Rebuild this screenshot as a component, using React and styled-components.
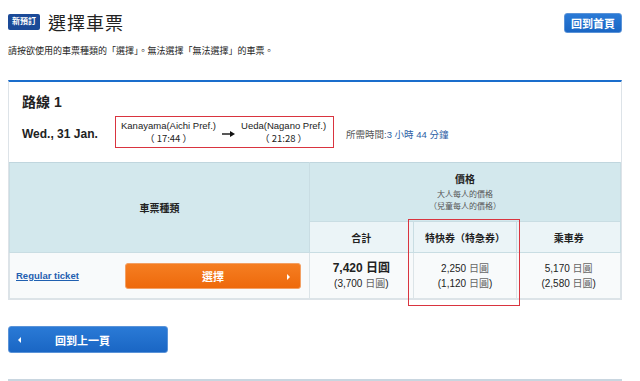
import React from 'react';
import styled, { createGlobalStyle } from 'styled-components';

const GlobalStyle = createGlobalStyle`
  body {
    margin: 0;
    background: #ffffff;
    font-family: "Liberation Sans", Arial, "Noto Sans CJK TC", sans-serif;
    color: #222;
  }
`;

const Page = styled.div`
  width: 614px;
  padding: 12px 18px 0 8px;
`;

const TopBar = styled.div`
  display: flex;
  align-items: center;
  justify-content: space-between;
  height: 20px;
`;

const TitleGroup = styled.div`
  display: flex;
  align-items: center;
  gap: 8px;
`;

const Badge = styled.span`
  background: #1b4a98;
  color: #fff;
  font-size: 8px;
  font-weight: bold;
  padding: 3px 4px;
  border-radius: 2px;
  line-height: 10px;
`;

const Title = styled.h1`
  margin: 0;
  font-size: 18px;
  font-weight: normal;
  letter-spacing: 1px;
  color: #222;
`;

const BlueButton = styled.button`
  background: linear-gradient(#2a7ad6, #1a66c4);
  border: 1px solid #5a93d8;
  border-radius: 3px;
  color: #fff;
  font-family: inherit;
  font-weight: bold;
  font-size: 11px;
  padding: 0;
  cursor: pointer;
`;

const HomeButton = styled(BlueButton)`
  width: 58px;
  height: 20px;
  margin-top: 2px;
`;

const Notice = styled.p`
  margin: 13px 0 0;
  font-family: "Noto Sans CJK TC", sans-serif;
  font-size: 9px;
  line-height: 12px;
`;

const Card = styled.div`
  margin-top: 23px;
  border: 1px solid #dde3e8;
  border-top: 2px solid #1a6dcc;
`;

const RouteHead = styled.div`
  padding: 12px 13px 14px;
`;

const RouteLabel = styled.div`
  font-size: 14px;
  font-weight: bold;
  line-height: 16px;
`;

const RouteRow = styled.div`
  display: flex;
  align-items: center;
  margin-top: 6px;
`;

const DateText = styled.div`
  font-size: 12px;
  font-weight: bold;
  width: 93px;
  padding-top: 4px;
`;

const StationBox = styled.div`
  display: flex;
  align-items: center;
  width: 210px;
  height: 30px;
  border: 1px solid #d9343f;
  padding: 0 2px 0 5px;
  gap: 6px;
`;

const Station = styled.div`
  font-size: 9.5px;
  line-height: 12px;
  text-align: center;
  white-space: nowrap;
  color: #222;
`;

const Time = styled.span`
  font-family: "Noto Sans CJK TC", sans-serif;
`;

const Duration = styled.div`
  margin-left: 12px;
  padding-top: 3px;
  font-size: 9.5px;
  color: #555;
`;

const Blue = styled.span`
  color: #2d5fa5;
`;

const TableWrap = styled.div`
  position: relative;
`;

const Table = styled.table`
  width: 100%;
  border-collapse: collapse;
  table-layout: fixed;
`;

const Th = styled.th`
  background: ${({ $light }) => ($light ? '#ebf4f7' : '#d3e8ed')};
  border: 1px solid #c9dde3;
  border-top-color: #c0d6de;
  font-size: 10px;
  font-weight: bold;
  color: #222;
  padding: 0;
  height: ${({ $h }) => $h || 'auto'};
`;

const SubNote = styled.div`
  font-size: 8px;
  font-weight: normal;
  color: #555;
  line-height: 12px;
`;

const PriceTitle = styled.div`
  margin-bottom: 3px;
`;

const Td = styled.td`
  background: #f8fafb;
  border: 1px solid #dce4e8;
  border-top: none;
  height: 45px;
  padding: 0;
  text-align: center;
  font-size: 10px;
  line-height: 14px;
  color: #333;
`;

const TicketCell = styled.div`
  display: flex;
  align-items: center;
  justify-content: space-between;
  padding: 0 8px 0 6px;
`;

const TicketLink = styled.a`
  color: #1f5fb0;
  font-weight: bold;
  font-size: 9.5px;
  text-decoration: underline;
`;

const SelectButton = styled.button`
  width: 176px;
  height: 26px;
  background: linear-gradient(#f57e22, #ee690b);
  border: 1px solid #f3a064;
  border-radius: 3px;
  color: #fff;
  font-family: inherit;
  font-weight: bold;
  font-size: 11px;
  position: relative;
  padding: 0;
  cursor: pointer;
`;

const Caret = styled.span`
  position: absolute;
  right: 10px;
  top: 10px;
  width: 0;
  height: 0;
  border-top: 3px solid transparent;
  border-bottom: 3px solid transparent;
  border-left: 3px solid #fff;
`;

const Amount = styled.div`
  font-size: ${({ $big }) => ($big ? '12px' : '10px')};
  font-weight: ${({ $big }) => ($big ? 'bold' : 'normal')};
  color: #222;
  line-height: 15px;
`;

const Yen = styled.span`
  color: ${({ $dark }) => ($dark ? '#222' : '#666')};
`;

const Highlight = styled.div`
  position: absolute;
  left: 399px;
  top: 57px;
  width: 110px;
  height: 85px;
  border: 1px solid #d9343f;
  pointer-events: none;
`;

const BackButton = styled(BlueButton)`
  display: flex;
  align-items: center;
  width: 160px;
  height: 27px;
  margin-top: 26px;
  padding-left: 9px;
`;

const BackCaret = styled.span`
  width: 0;
  height: 0;
  border-top: 3px solid transparent;
  border-bottom: 3px solid transparent;
  border-right: 3px solid #fff;
  margin-right: 34px;
`;

const BottomRule = styled.div`
  margin-top: 26px;
  height: 2px;
  background: #c9d6e0;
`;

const ArrowIcon = () => (
  <svg width="13" height="8" viewBox="0 0 13 8" style={{ marginTop: 4 }}>
    <path d="M0 4 H9" stroke="#111" strokeWidth="1.4" />
    <path d="M8 1 L13 4 L8 7 Z" fill="#111" />
  </svg>
);

const prices = [
  { adult: '2,250', child: '1,120' },
  { adult: '5,170', child: '2,580' },
];

export default function App() {
  return (
    <>
      <GlobalStyle />
      <Page>
        <TopBar>
          <TitleGroup>
            <Badge>新預訂</Badge>
            <Title>選擇車票</Title>
          </TitleGroup>
          <HomeButton>回到首頁</HomeButton>
        </TopBar>
        <Notice>請按欲使用的車票種類的「選擇」。無法選擇「無法選擇」的車票。</Notice>

        <Card>
          <RouteHead>
            <RouteLabel>路線 1</RouteLabel>
            <RouteRow>
              <DateText>Wed., 31 Jan.</DateText>
              <StationBox>
                <Station>
                  Kanayama(Aichi Pref.)
                  <br />
                  <Time>（ 17:44 ）</Time>
                </Station>
                <ArrowIcon />
                <Station>
                  Ueda(Nagano Pref.)
                  <br />
                  <Time>（ 21:28 ）</Time>
                </Station>
              </StationBox>
              <Duration>
                所需時間:<Blue>3 小時 44 分鐘</Blue>
              </Duration>
            </RouteRow>
          </RouteHead>

          <TableWrap>
            <Table>
              <colgroup>
                <col style={{ width: '300px' }} />
                <col />
                <col />
                <col />
              </colgroup>
              <thead>
                <tr>
                  <Th rowSpan={2}>車票種類</Th>
                  <Th colSpan={3} $h="58px">
                    <PriceTitle>價格</PriceTitle>
                    <SubNote>大人每人的價格</SubNote>
                    <SubNote>（兒童每人的價格）</SubNote>
                  </Th>
                </tr>
                <tr>
                  <Th $light $h="30px">合計</Th>
                  <Th $light>特快券（特急券）</Th>
                  <Th $light>乘車券</Th>
                </tr>
              </thead>
              <tbody>
                <tr>
                  <Td>
                    <TicketCell>
                      <TicketLink href="#">Regular ticket</TicketLink>
                      <SelectButton>
                        選擇<Caret />
                      </SelectButton>
                    </TicketCell>
                  </Td>
                  <Td>
                    <Amount $big>
                      7,420 <Yen $dark>日圓</Yen>
                    </Amount>
                    <Amount>
                      (3,700 <Yen>日圓</Yen>)
                    </Amount>
                  </Td>
                  {prices.map((p) => (
                    <Td key={p.adult}>
                      <Amount>
                        {p.adult} <Yen>日圓</Yen>
                      </Amount>
                      <Amount>
                        ({p.child} <Yen>日圓</Yen>)
                      </Amount>
                    </Td>
                  ))}
                </tr>
              </tbody>
            </Table>
            <Highlight />
          </TableWrap>
        </Card>

        <BackButton>
          <BackCaret />
          回到上一頁
        </BackButton>
        <BottomRule />
      </Page>
    </>
  );
}
